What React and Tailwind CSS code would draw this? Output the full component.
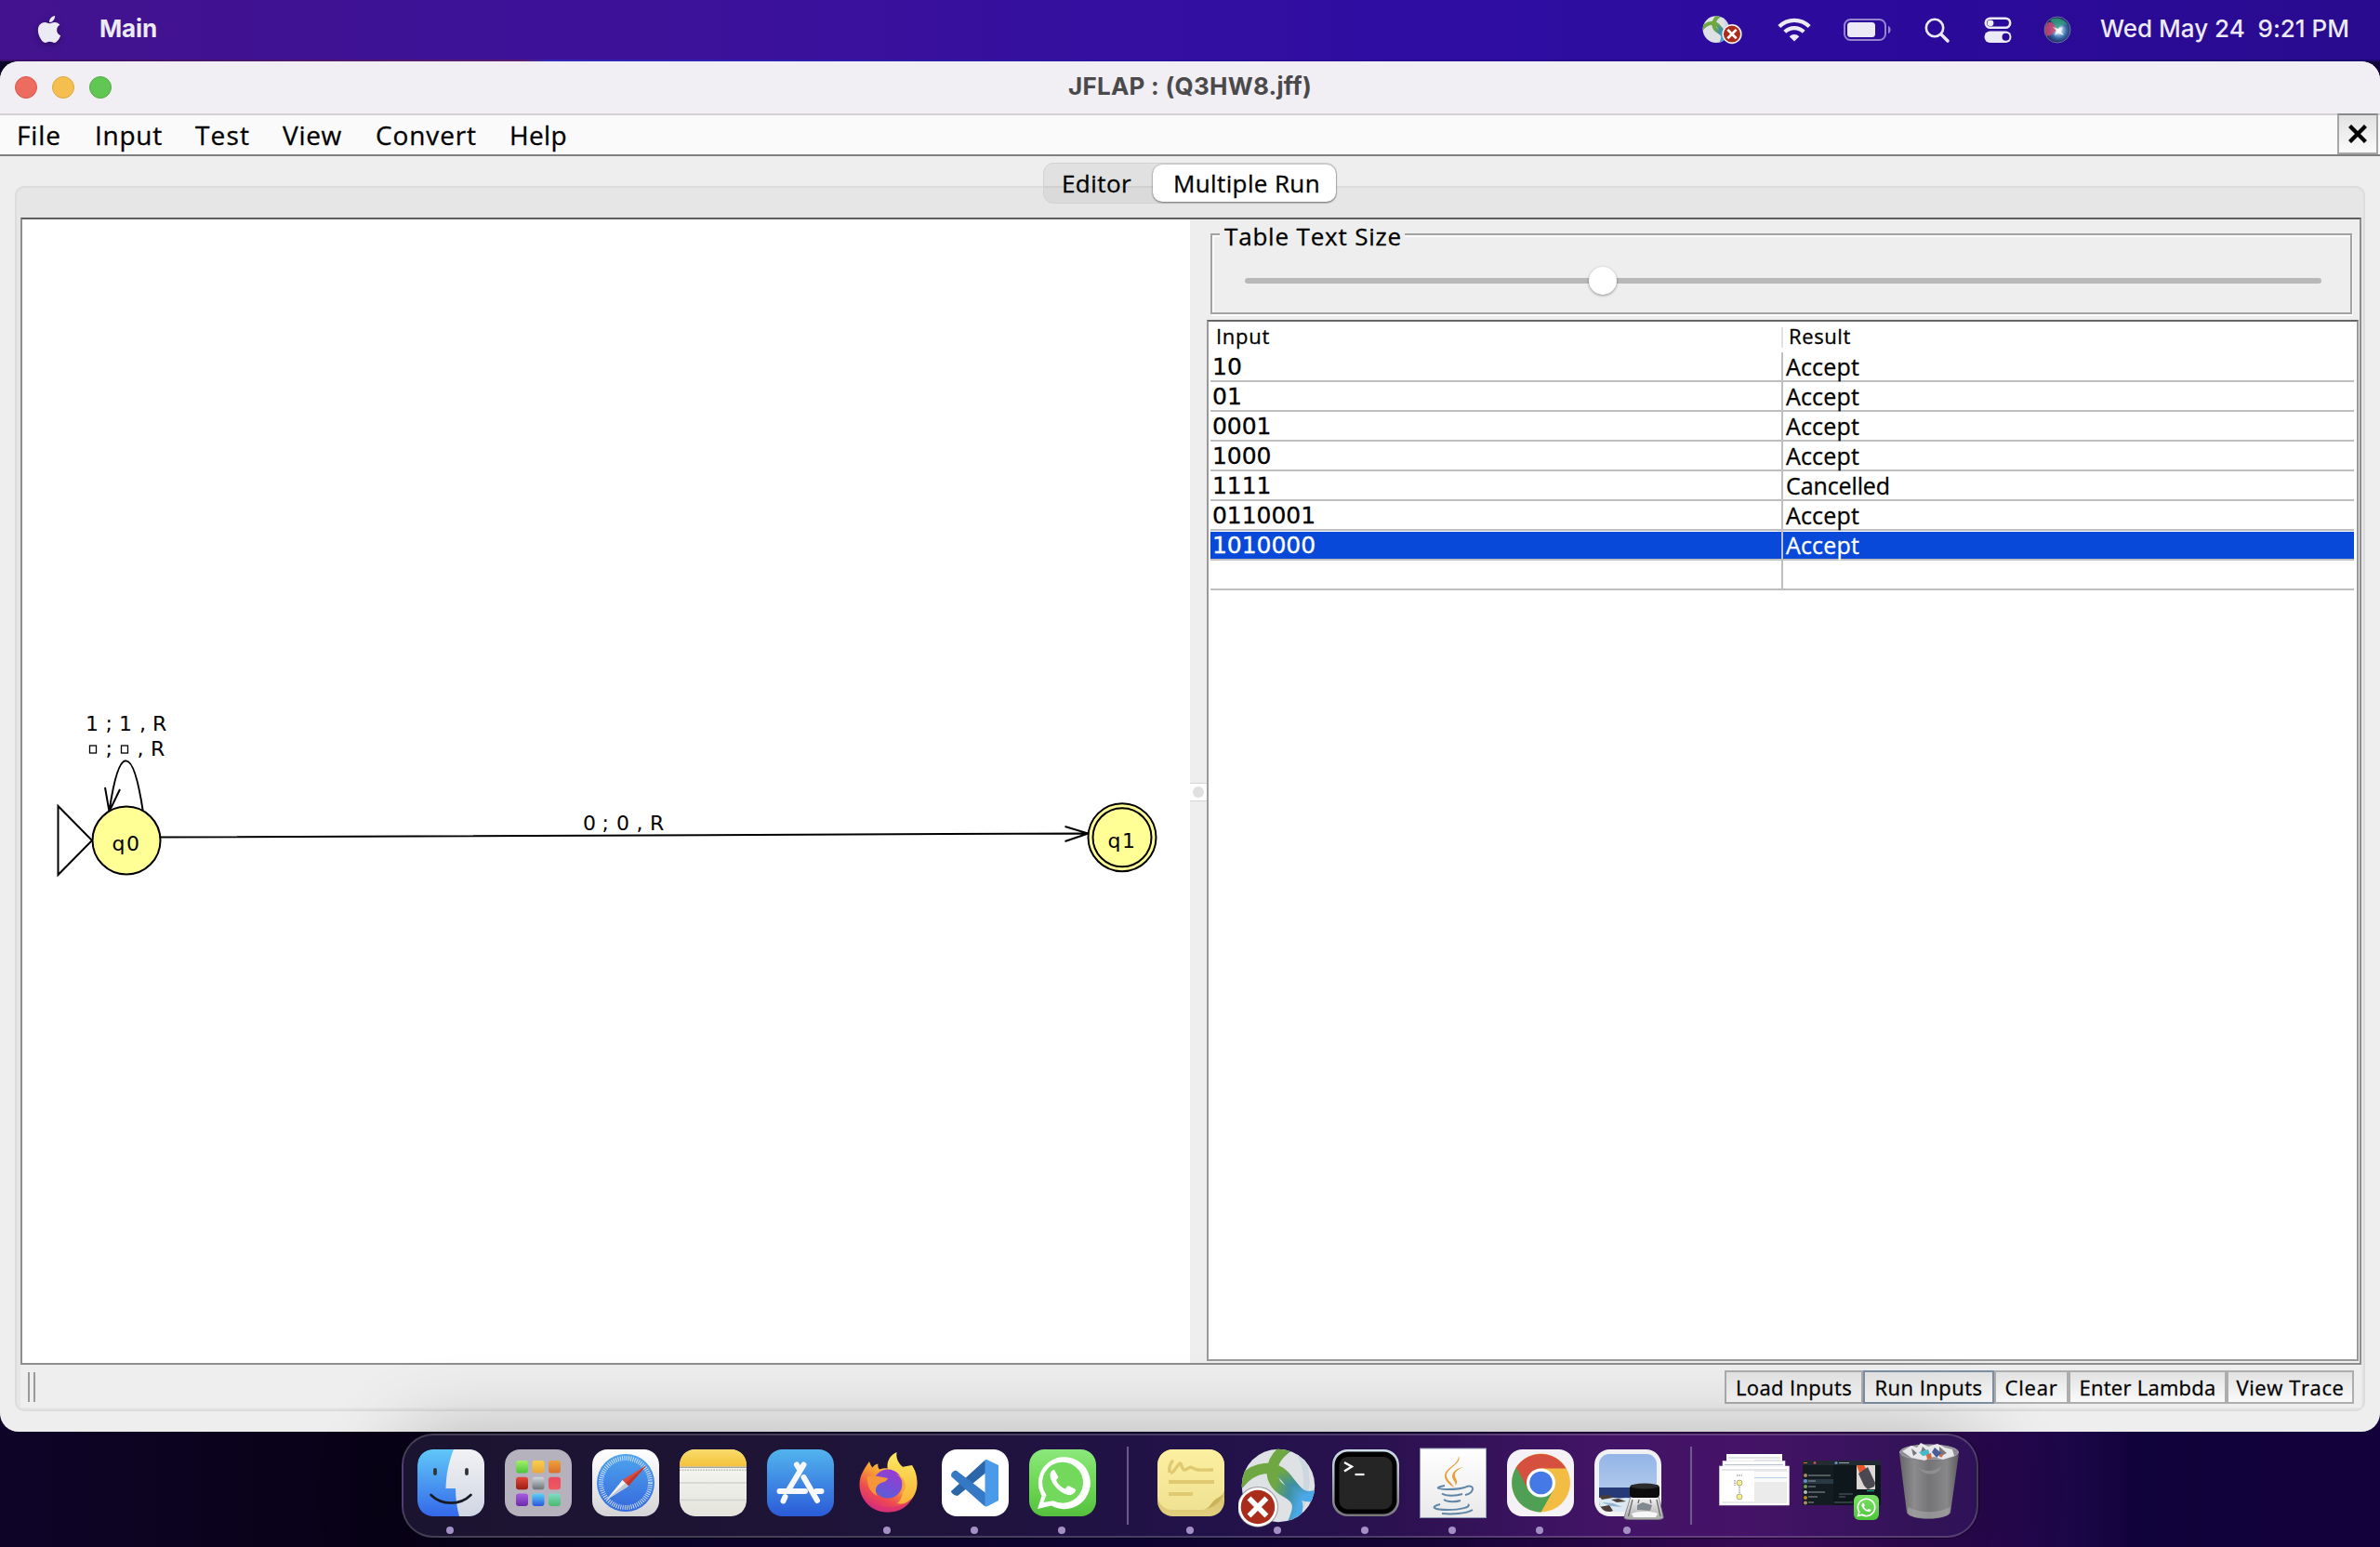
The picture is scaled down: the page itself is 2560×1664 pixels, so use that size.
import React, { useLayoutEffect, useRef, useState } from "react";
import { FaApple, FaWhatsapp } from "react-icons/fa";

const SANS = "font-['Open_Sans','Noto_Sans',sans-serif]";
const UI = "font-['Inter','Roboto',sans-serif]";
const DIGITS = "font-['DejaVu_Sans',sans-serif]";

/* Text tracked so that it fills the given width. */
function T({ w, className = "", children }) {
  const ref = useRef(null);
  const [ls, setLs] = useState(0);
  useLayoutEffect(() => {
    const el = ref.current;
    el.style.letterSpacing = "0px";
    const natural = el.getBoundingClientRect().width;
    setLs((w - natural) / String(children).length);
    el.style.letterSpacing = "";
  }, [w, children]);
  return (
    <span
      ref={ref}
      className={`inline-block whitespace-pre ${className}`}
      style={{ letterSpacing: `${ls}px` }}
    >
      {children}
    </span>
  );
}

function Globe({ className, id, viewBox, bx, by, r }) {
  const a = r * 0.44;
  return (
    <svg className={className} viewBox={viewBox}>
      <defs>
        <linearGradient id={id} x1="0" y1="0" x2="1" y2="1">
          <stop offset=".3" stopColor="#6fa843" />
          <stop offset=".62" stopColor="#3f8fa0" />
          <stop offset=".9" stopColor="#4ba8e6" />
        </linearGradient>
        <clipPath id={`${id}c`}>
          <circle cx="41" cy="41" r="37.500" />
        </clipPath>
      </defs>
      <circle cx="41" cy="41" r="37.500" fill="#dfe2e4" />
      <g clipPath={`url(#${id}c)`} fill="none">
        <path d="M58 0C76 24 74 60 50 84" stroke="#cdd7df" strokeWidth="6" />
        <path d="M0 40C16 20 38 18 50 34S66 56 84 50" stroke={`url(#${id})`} strokeWidth="11" />
        <path d="M56 -2C28 14 30 38 48 47S62 66 54 84" stroke={`url(#${id})`} strokeWidth="11" />
      </g>
      <circle cx={bx} cy={by} r={r} fill="#fff" stroke="#55555588" />
      <circle cx={bx} cy={by} r={r * 0.85} fill="#aa2d1b" />
      <path
        d={`M${bx - a} ${by - a}L${bx + a} ${by + a}M${bx + a} ${by - a}L${bx - a} ${by + a}`}
        stroke="#fff"
        strokeWidth={r * 0.26}
      />
    </svg>
  );
}

function MenuBar() {
  return (
    <div className={`flex h-16 items-center bg-[linear-gradient(to_right,#43138f,#3a119b_33%,#2f0da3_60%,#2b0a9b_80%,#290b8f)] text-[#eceaf5] ${UI}`}>
      <FaApple className="-mt-[2px] ml-[38px] h-[33px] w-[30px] drop-shadow-[0_2px_3px_#0005]" />
      <div className="-mt-[3px] ml-[39px] w-[66px] text-[26px] font-bold leading-none">
        <T w={62}>Main</T>
      </div>
      <div className="flex-1" />
      <Globe className="h-[32px] w-[43px]" id="mg" viewBox="2 0 113 84" bx={86} by={54} r={28} />
      <svg className="ml-[38px] h-[26px] w-[36px]" viewBox="0 0 36 26" fill="none" stroke="#eceaf5" strokeWidth="4.200">
        <path d="M1.800 9.500a23 23 0 0 1 32.400 0M7.800 15.300a14.500 14.500 0 0 1 20.400 0" />
        <path d="M18 25.500l-5.300-5.300a7.500 7.500 0 0 1 10.600 0z" fill="#eceaf5" stroke="none" />
      </svg>
      <svg className="ml-[35px] h-[24px] w-[52px]" viewBox="0 0 52 24">
        <rect x="1" y="1" width="44" height="22" rx="6.500" fill="none" stroke="#eceaf5" strokeOpacity=".55" strokeWidth="2" />
        <rect x="4" y="4" width="30" height="16" rx="3.500" fill="#eceaf5" />
        <path d="M48 8c3.500 1 3.500 7 0 8z" fill="#eceaf5" fillOpacity=".55" />
      </svg>
      <svg className="ml-[35px] h-[27px] w-[27px]" viewBox="0 0 27 27" fill="none" stroke="#eceaf5" strokeLinecap="round">
        <circle cx="11" cy="11" r="9.200" strokeWidth="2.600" />
        <path d="M18 18l7 7" strokeWidth="3.400" />
      </svg>
      <svg className="ml-[37px] h-[28px] w-[30px]" viewBox="0 0 30 28">
        <rect x="1.800" y="1.800" width="26.400" height="10" rx="5" fill="none" stroke="#eceaf5" strokeWidth="2.600" />
        <circle cx="7" cy="6.800" r="3.400" fill="#eceaf5" />
        <rect x=".5" y="15.500" width="29" height="12.500" rx="6.200" fill="#eceaf5" />
        <circle cx="23.500" cy="21.700" r="4" fill="#2b0a9b" />
      </svg>
      <svg className="ml-[34px] h-[30px] w-[30px]" viewBox="0 0 30 30">
        <defs>
          <radialGradient id="siri" cx=".55" cy=".52">
            <stop offset="0" stopColor="#fff" />
            <stop offset=".25" stopColor="#a9c9ee" />
            <stop offset=".6" stopColor="#3a6ba8" />
            <stop offset="1" stopColor="#1c2556" />
          </radialGradient>
        </defs>
        <circle cx="15" cy="15" r="14" fill="url(#siri)" />
        <path d="M3 9C8 3 13 10 14 15 10 20 5 23 3 21 1 17 1 13 3 9z" fill="#d0476e" opacity=".8" />
        <path d="M7 5c6-5 15-2 19 5-5-2-9 1-11 5-2-4-5-8-8-10z" fill="#2f9d78" opacity=".8" />
        <path d="M10 12L16 14L21 12L19 17L22 21L16 19L12 21L14 16z" fill="#fff" opacity=".75" />
        <circle cx="15" cy="15" r="14" fill="none" stroke="#9aa4c8" strokeOpacity=".6" />
      </svg>
      <div className="-mt-[3px] ml-[31px] mr-[33px] w-[268px] text-[26px] font-medium leading-none">
        <T w={268}>{"Wed May 24  9:21 PM"}</T>
      </div>
    </div>
  );
}

const menus = [
  ["File", "w-[84px]", 48],
  ["Input", "w-[108px]", 73],
  ["Test", "w-[94px]", 59],
  ["View", "w-[100px]", 64],
  ["Convert", "w-[144px]", 109],
  ["Help", "w-[80px]", 62],
];

function Diagram() {
  return (
    <svg className="block h-[1230px] w-[1256px]" viewBox="24 236 1256 1230" fill="none" stroke="#000" strokeWidth="2">
      <path d="M154 874C143 800 128 800 117.500 873M113 847L117.500 873L129 849" />
      <path d="M62.500 867V941L99 904Z" />
      <path d="M173 900.500L1170.500 896.500M1145.500 889L1170.500 896.500L1145.500 905" />
      <circle cx="136" cy="904" r="36.500" fill="#ffff96" />
      <circle cx="1207" cy="900.700" r="36.500" fill="#ffff96" />
      <circle cx="1207" cy="900.700" r="31.500" />
      <rect x="96.500" y="802" width="7" height="8" strokeWidth="1.300" />
      <rect x="130.500" y="802" width="7" height="8" strokeWidth="1.300" />
      <g fill="#000" stroke="none" className={`text-[22px] ${DIGITS}`}>
        <text x="92 113.500 128 150 164" y="786">1;1,R</text>
        <text x="113.500 147.500 162" y="812.700">;,R</text>
        <text x="627 647.500 663 684.500 699" y="892.700">0;0,R</text>
        <text x="120.500 136" y="914.700">q0</text>
        <text x="1191.500 1207" y="911.500">q1</text>
      </g>
    </svg>
  );
}

const rows = [
  ["10", 32, "Accept", 79],
  ["01", 32, "Accept", 79],
  ["0001", 63.5, "Accept", 79],
  ["1000", 63.5, "Accept", 79],
  ["1111", 63.5, "Cancelled", 112],
  ["0110001", 111, "Accept", 79],
  ["1010000", 111, "Accept", 79],
  ["", 0, "", 0],
];

function ResultTable() {
  return (
    <div className="h-[1120px] w-[1239px] border-2 border-[#999] border-t-[#666] bg-white pl-[2px]">
      <div className="flex h-[33px] w-[1230px] text-[22px] leading-[31px]">
        <div className="w-[614px] pl-[6px]"><T w={58}>Input</T></div>
        <div className="mt-[6px] h-[22px] w-[2px] bg-[#e2e2e2]" />
        <div className="pl-[6px]"><T w={67}>Result</T></div>
      </div>
      {rows.map(([a, aw, b, bw], i) => {
        const sel = i === 6;
        return (
          <div
            key={i}
            className={`flex h-8 w-[1230px] border-b-2 border-[#bfbfbf] text-[25px] ${sel ? "text-white" : "text-black"}`}
          >
            <div className={`w-[614px] pl-[2px] ${DIGITS} ${sel ? "mt-px h-[29px] bg-[#0849d9] leading-[30px]" : "leading-[32px]"}`}>{a && <T w={aw}>{a}</T>}</div>
            <div className="w-[2px] bg-[#bfbfbf]" />
            <div className={`w-[614px] pl-[3px] ${sel ? "mt-px h-[29px] bg-[#0849d9] leading-[28px]" : "leading-[30px]"}`}>{b && <T w={bw}>{b}</T>}</div>
          </div>
        );
      })}
    </div>
  );
}

function Btn({ className, w, focus, children }) {
  return (
    <div
      className={`flex h-9 items-center justify-center border-2 bg-gradient-to-b from-[#e2e2e2] to-[#fafafa] pb-px text-[22px] leading-none ${focus ? "border-[#7f8fa3]" : "border-[#adadad]"} ${className}`}
    >
      <T w={w}>{children}</T>
    </div>
  );
}

function Window() {
  return (
    <div className={`flex h-[1474px] w-full flex-col overflow-hidden rounded-[20px] bg-[#eee] text-black [-webkit-text-stroke:0.3px] ${SANS}`}>
      <div className={`flex h-[56px] items-center bg-[#f1eef4] [-webkit-text-stroke:0] ${UI}`}>
        <div className="flex w-[300px] gap-4 pl-4">
          <div className="size-6 rounded-full border border-[#d8564a] bg-[#ed6b5f]" />
          <div className="size-6 rounded-full border border-[#dba540] bg-[#f5bf4f]" />
          <div className="size-6 rounded-full border border-[#52ab43] bg-[#62c655]" />
        </div>
        <div className="flex flex-1 justify-center pb-[3px] text-[26px] font-bold leading-none text-[#4a494b]">
          <T w={262}>JFLAP : (Q3HW8.jff)</T>
        </div>
        <div className="w-[300px]" />
      </div>
      <div className="flex h-[46px] items-center border-b-2 border-t-2 border-b-[#808080] border-t-[#d4d2d6] bg-[#fafafa] pl-[18px] text-[28px] leading-none">
        {menus.map(([m, c, w]) => (
          <div key={m} className={c}><T w={w}>{m}</T></div>
        ))}
        <div className="-mt-[2px] ml-auto mr-[2px] flex h-11 w-11 items-center justify-center border-2 border-[#a6a6a6] border-t-[#888] bg-gradient-to-b from-[#e2e2e2] to-[#fafafa]">
          <svg className="h-5 w-5" viewBox="0 0 20 20" stroke="#000" strokeWidth="4.400">
            <path d="M1.500 1.500L18.500 18.500M18.500 1.500L1.500 18.500" />
          </svg>
        </div>
      </div>
      <div className="relative z-10 mx-auto mt-[7px] flex h-11 w-[316px] rounded-[11px] border border-[#d2d2d2] bg-black/5 text-[26px]">
        <div className="flex flex-1 items-center pb-px pl-[19px] leading-none"><T w={75}>Editor</T></div>
        <div className="my-px flex w-[197px] items-center rounded-[10px] bg-white pl-[22px] leading-none shadow-[0_1px_2px_#0006,0_0_2px_#0005]">
          <T w={158}>Multiple Run</T>
        </div>
      </div>
      <div className="mx-[16px] -mt-[19px] flex h-[1318px] flex-col rounded-[10px] border-2 border-[#dcdcdc] bg-[#e6e6e6] pb-[2px] pl-[4px] pr-[2px] pt-[32px]">
        <div className="flex h-[1234px] border-2 border-[#8e8e8e] border-t-[#5d5d5d] bg-[#eee]">
          <div className="w-[1256px] bg-white [-webkit-text-stroke:0]">
            <Diagram />
          </div>
          <div className="flex w-[18px] flex-col justify-center bg-[#eee] pt-[2px]">
            <div className="flex h-[20px] items-center justify-center border-y border-[#d5d5d5] bg-[#fdfdfd]">
              <div className="size-3 rounded-full bg-[#e0e0e0]" />
            </div>
          </div>
          <div className="w-[1240px]">
            <fieldset className="relative mb-[6px] ml-[4px] mt-[15px] h-[87px] w-[1228px] border-2 border-[#a3a3a3] shadow-[inset_2px_2px_0_#fafafa,1px_2px_0_#fff]">
              <div className="absolute -top-[15px] left-[8px] w-[199px] bg-[#eee] pl-[5px] text-[26px] leading-[32px]"><T w={191}>Table Text Size</T></div>
              <div className="ml-[35px] mt-[46px] h-[6px] w-[1158px] rounded-full bg-[#b8b8b8]">
                <div className="relative left-[370px] -top-[12px] size-[30px] rounded-full bg-white shadow-[0_1px_3px_#0006]" />
              </div>
            </fieldset>
            <ResultTable />
          </div>
        </div>
        <div className="flex h-[46px] items-center bg-[#eee] pl-[8px] pr-[8px] pt-[2px]">
          <div className="h-8 w-[8px] border-x-2 border-[#999]" />
          <div className="flex-1" />
          <Btn className="w-[149px]" w={125}>Load Inputs</Btn>
          <Btn className="w-[141px]" w={116} focus>Run Inputs</Btn>
          <Btn className="w-[80px]" w={57}>Clear</Btn>
          <Btn className="w-[170px]" w={147}>Enter Lambda</Btn>
          <Btn className="w-[137px]" w={116}>View Trace</Btn>
        </div>
      </div>
    </div>
  );
}

function G({ id, a, b, m }) {
  return (
    <linearGradient id={id} x1="0" y1="0" x2="0" y2="1">
      <stop offset="0" stopColor={a} />
      {m && <stop offset=".5" stopColor={m} />}
      <stop offset="1" stopColor={b} />
    </linearGradient>
  );
}

const Sq = ({ fill, ...p }) => <rect width="72" height="72" rx="16.500" fill={fill} {...p} />;

const pads = [
  ["#a2f06a", "#4cc43a"], ["#f7d14a", "#eea63a"], ["#efa03c", "#d9702c"],
  ["#e2483a", "#9c1c12"], ["#cfd8de", "#6b7074"], ["#ea4a62", "#ee5a60"],
  ["#a95be0", "#6a2ba8"], ["#5ad2f8", "#2a55dd"], ["#7fdcc8", "#4ab86c"],
];

const icons = {
  finder: (
    <>
      <defs><G id="f1" a="#60c8f8" b="#3468ea" /><G id="f2" a="#f2f2f4" b="#cfd6e4" /><clipPath id="fc"><Sq /></clipPath></defs>
      <g clipPath="url(#fc)">
        <Sq fill="url(#f1)" />
        <path d="M39 0C33 15 31 28 30.500 42H41C41 53 42.500 63 45 72H72V0Z" fill="url(#f2)" />
      </g>
      <path d="M19 22V26M53 22V26" stroke="#333" strokeWidth="3.800" strokeLinecap="round" />
      <path d="M14.500 49C26 60.500 46 60.500 57.500 49" stroke="#1a1a22" strokeWidth="2.600" fill="none" strokeLinecap="round" />
    </>
  ),
  launchpad: (
    <>
      <Sq fill="#b5b1bd" />
      {pads.map(([a, b], i) => (
        <g key={i}>
          <defs><G id={`lp${i}`} a={a} b={b} /></defs>
          <rect x={12 + (i % 3) * 17.5} y={12 + Math.floor(i / 3) * 17.8} width="13" height="13.500" rx="3" fill={`url(#lp${i})`} />
        </g>
      ))}
    </>
  ),
  safari: (
    <>
      <defs><G id="s1" a="#fff" b="#d4d4d6" /><G id="s2" a="#4ea4ee" b="#3568dc" /></defs>
      <Sq fill="url(#s1)" />
      <circle cx="36" cy="36" r="31" fill="url(#s2)" />
      <circle cx="36" cy="36" r="26.500" fill="none" stroke="#d9e9fb" strokeWidth="5" strokeDasharray="0.900 1.412" />
      <path d="M58.500 17L32.500 33L39 39.500Z" fill="#e0483e" />
      <path d="M58.500 17L35.750 36.250L39 39.500Z" fill="#b83a34" />
      <path d="M15 54.500L32.500 33L39 39.500Z" fill="#f4f4f4" />
      <path d="M15 54.500L35.750 36.250L39 39.500Z" fill="#bfc6d4" />
    </>
  ),
  notes: (
    <>
      <defs><G id="n1" a="#f9dc6c" b="#f5c23a" /><G id="n2" a="#fafaf8" b="#e4e4dc" /><clipPath id="nc"><Sq /></clipPath></defs>
      <g clipPath="url(#nc)">
        <Sq fill="url(#n2)" />
        <rect width="72" height="18.500" fill="url(#n1)" />
        <path d="M0 19.200H72" stroke="#a8a69c" strokeWidth="1.400" />
        <path d="M0 22.300H72" stroke="#bdbcb6" strokeWidth="1.600" strokeDasharray="1.600 1.200" />
        <path d="M0 36H72M0 54.500H72" stroke="#d2d2d0" strokeWidth="1.400" />
      </g>
    </>
  ),
  appstore: (
    <>
      <defs><G id="a1" a="#52b4ee" b="#2a5bd8" /></defs>
      <Sq fill="url(#a1)" />
      <g stroke="#f6f8fc" strokeWidth="6" strokeLinecap="round">
        <path d="M13.500 45H41M53 45H58.500" />
        <path d="M39.500 16.500L23 44M19.500 51L17.500 55.500" />
        <path d="M32 16.500L35 21.500M39.500 30L54 55" />
      </g>
    </>
  ),
  firefox: (
    <>
      <defs>
        <linearGradient id="ff1" x1=".85" y1=".1" x2=".25" y2="1">
          <stop offset="0" stopColor="#fbe04e" /><stop offset=".4" stopColor="#f79a34" />
          <stop offset=".7" stopColor="#ee4a50" /><stop offset="1" stopColor="#d62a80" />
        </linearGradient>
        <linearGradient id="ff2" x1=".7" y1="0" x2=".2" y2="1">
          <stop offset="0" stopColor="#9a3ad2" /><stop offset="1" stopColor="#5560d8" />
        </linearGradient>
        <G id="ff3" a="#fdea60" b="#f9b13a" />
      </defs>
      <path d="M16 13C17 16 18 18 19.500 19.500C21 17 23 16 25.500 15.500C25 18 25.500 20 27 21.500C31 20 36 20 40 21L62 17C67 25 68 32 67 39C65 56 51 67.500 36 67.500C19 67.500 5.500 54 5.500 38C5.500 28 10 22 16 13Z" fill="url(#ff1)" />
      <path d="M45.500 3C44 12 50 17 56 23C58 22 58 19 59 17.500C67 26 69 36 66.500 44C63 56 53 60 46 58C54 52 54 36 46 29C40 24 35 21 35.500 19C35 12 39 6 45.500 3Z" fill="url(#ff3)" />
      <circle cx="36" cy="37" r="15.500" fill="url(#ff2)" />
      <path d="M13.500 30C18 27.500 23 29 28 29.500L36 31C35 35 30 35 27 37C22 40 22 46 25 50C15 46 14 36 13.500 30Z" fill="#f6963a" />
      <path d="M8 49C20 66 50 66 62 52C56 65 46 67.500 36 67.500C22 67.500 12 60 8 49Z" fill="#d92f78" opacity=".7" />
      <path d="M43 26C52 29 55 40 49 49C57 46 58 30 43 26Z" fill="#f9a236" />
    </>
  ),
  vscode: (
    <>
      <Sq fill="#fff" />
      <path d="M10 45L46.500 11.500L50 23L17 50C14 50 10 47 10 45Z" fill="#2a66a8" />
      <path d="M10 27C11 24 14 22 16 23L50 49L46.500 61.500L10.500 29.500Z" fill="#3578c6" />
      <path d="M46.500 11.500C47 11 48.500 11 49 11.300L61 17V55L49 61.200C48 61.700 47 61.500 46.500 61Z" fill="#4b9aea" />
    </>
  ),
  whatsapp: (
    <>
      <defs><G id="w1" a="#8ce87c" m="#6dd954" b="#56c03e" /></defs>
      <Sq fill="url(#w1)" />
      <path d="M9 64L13.500 50A28 28 0 1 1 24 60.500Z" fill="#fff" />
      <path d="M15.500 57L18.500 49A22 22 0 1 1 26 55.300Z" fill="#72d95c" />
      <path d="M27 22C25 21.500 23 24 22.500 27C22 36 34 48.500 43 49C47 49 50 46.500 50 43L42 39L38.500 42.500C34 40.500 30.500 37 29 33L31.500 30Z" fill="#fff" />
    </>
  ),
  stickies: (
    <>
      <defs><G id="st" a="#fcf0a0" b="#efe393" /><G id="st2" a="#c6ab4e" b="#e2cf7e" /></defs>
      <Sq fill="url(#st2)" />
      <path d="M0 16.500A16.500 16.500 0 0 1 16.500 0H55.500A16.500 16.500 0 0 1 72 16.500V44C68 56 58 65 48 65H16A16 16 0 0 1 0 50Z" fill="url(#st)" />
      <path d="M72 44C71 50 66 51 62 54C57 58 56 64 48 65C60 64 70 56 72 44Z" fill="#c9b45c" />
      <path d="M13 25C12 18 15 13 17 12M14 25C18 26 20 18 24 15C26 14 26 22 29 22C33 22 34 17 38 20C42 23 46 22 60 22" fill="none" stroke="#dfca72" strokeWidth="3.400" />
      <path d="M12 35H61M12 48H38" stroke="#dfca72" strokeWidth="4.200" />
    </>
  ),
  terminal: (
    <>
      <defs><G id="t1" a="#cfe0ea" b="#77777a" /></defs>
      <Sq fill="url(#t1)" />
      <rect x="2.500" y="2.500" width="67" height="67" rx="14.500" fill="#000" />
      <rect x="7.500" y="8" width="57" height="56.500" rx="9" fill="#252525" />
      <path d="M13 14L21 18.500L13 23.500" fill="none" stroke="#fff" strokeWidth="2.400" />
      <path d="M24.500 27H34.500" stroke="#fff" strokeWidth="2.200" />
    </>
  ),
  java: (
    <>
      <defs><G id="j1" a="#fff" b="#e9e9e9" /></defs>
      <rect x=".5" y="-1" width="71" height="74.500" fill="url(#j1)" stroke="#8c9cb0" />
      <path d="M42 7C46 16 28 20 29 29C30 34 35 36 37 41C27 35 24 28 30 22C34 18 42 14 42 7ZM47.500 19C41 21 37 25 38 29C39 33 42 34 38.500 39C39 34 35 33 35 29C35 24 40 20 47.500 19Z" fill="#e6a03a" />
      <g fill="none" stroke="#5f86a6" strokeWidth="2">
        <path d="M27 39C16 41 18 42.500 30 43C38 43 46 42 50 40.500M50 40C60 37 59 47 49 49M24 47.500C28 50.500 40 50 46 48M26 54C30 57 40 56.500 44 55M22 59C10 62 16 65 30 65C44 65 56 62 52 59M24 69C34 70 50 69.500 57 65" />
      </g>
    </>
  ),
  chrome: (
    <>
      <Sq fill="#f5f2f7" />
      <circle cx="36.500" cy="36" r="31.500" fill="#f2bd42" />
      <path d="M36.500 20.500H63.500A31.500 31.500 0 0 0 9.300 20.200L23 44Z" fill="#d6503f" />
      <path d="M10 19.200A31.500 31.500 0 0 0 36.500 67.500L50 43.700L23 43.700Z" fill="#4f9f55" />
      <circle cx="36.500" cy="36" r="15.500" fill="#fff" />
      <circle cx="36.500" cy="36" r="12.300" fill="#4479e6" />
    </>
  ),
  preview: (
    <>
      <defs><G id="p1" a="#8fb2e6" b="#c6d8f0" /><G id="p2" a="#f6f6f6" b="#a8a8a8" /><clipPath id="pc"><rect x="5" y="5" width="62" height="62" rx="11" /></clipPath></defs>
      <Sq fill="#f1f0f2" />
      <g clipPath="url(#pc)">
        <rect width="72" height="72" fill="url(#p1)" />
        <rect y="41" width="72" height="31" fill="#273a78" />
        <path d="M0 54C10 48 20 54 34 52L72 54V72H0Z" fill="#dbe8f2" />
        <path d="M5 50L16 49L20 52L8 54ZM5 62L16 60L20 66L10 70L5 70ZM18 54L26 53L34 56L24 57Z" fill="#4a3c38" />
        <path d="M8 57L20 58L30 62L18 61Z" fill="#8fb4d0" />
      </g>
      <path d="M39 51H69L74 72C75 76 71 75.500 54 75.500S32 76 32 73Z" fill="url(#p2)" stroke="#777" strokeWidth=".8" />
      <path d="M41 54L36.500 72M67 54L71 72M48 54L47 58M60 54L61 58" stroke="#6a6a6a" strokeWidth="1.300" />
      <path d="M46 60L52 57L62 60L60 66L46 65Z" fill="#80898e" />
      <path d="M40 69C48 66 60 66 68 69L66 73H42Z" fill="#f7f7f7" />
      <rect x="38" y="38" width="32" height="14" rx="4" fill="#0c0c0c" />
      <ellipse cx="54" cy="39.500" rx="15" ry="3" fill="#2c2c2e" />
    </>
  ),
};

function Item({ name, dot }) {
  return (
    <div className="flex w-[72px] flex-col items-center gap-[11px]">
      {name === "jflap" ? (
        <Globe className="-mb-3 -mt-[4px] ml-[2px] h-[88px] w-[88px] max-w-none" id="dg" viewBox="0 0 84 84" bx={20} by={63} r={20.5} />
      ) : (
        <svg className="h-[72px] w-[72px] overflow-visible" viewBox="0 0 72 72">{icons[name]}</svg>
      )}
      {dot && <div className="-ml-[2px] size-2 rounded-full bg-[#a490c4]" />}
    </div>
  );
}

function Divider({ className }) {
  return <div className={`h-[84px] w-[2px] bg-[#7d6a9c]/80 ${className}`} />;
}

function Thumbs() {
  return (
    <>
      <svg className="mt-[5px] h-[56px] w-[76px]" viewBox="0 0 76 56">
        <rect x="8" y="0" width="60" height="20" fill="#fff" />
        <path d="M10 4H66M38 7H66" stroke="#c3c9d2" strokeWidth="1" />
        <rect x="4" y="7.500" width="67" height="20" fill="#fff" stroke="#dcdce2" strokeWidth=".6" />
        <path d="M6 11.500H69" stroke="#b9c3d0" strokeWidth="1" />
        <rect x=".5" y="13" width="75" height="42" fill="#fff" stroke="#dcdce2" strokeWidth=".6" />
        <path d="M3 17H73" stroke="#c9cdd4" strokeWidth="1" />
        <rect x="38" y="18" width="35" height="33" fill="#ebebeb" />
        <rect x="38" y="19" width="35" height="11" fill="#fafafa" />
        <path d="M38 25.500H73" stroke="#b4cdea" strokeWidth="1.200" />
        <path d="M22 33V43M19 23H25M17 28V34" stroke="#777" strokeWidth="1" strokeDasharray="1.500 1" />
        <circle cx="22" cy="31" r="3" fill="#f6ee86" stroke="#666" strokeWidth=".5" />
        <circle cx="22" cy="46" r="3" fill="#f6ee86" stroke="#666" strokeWidth=".5" />
        <path d="M3 52H73" stroke="#d5d5d5" strokeWidth="1" />
      </svg>
      <div className="relative ml-[14px] mt-[12px] h-[48px] w-[84px]">
        <svg className="block h-[48px] w-[84px]" viewBox="0 0 84 48">
          <rect width="84" height="48" fill="#0e171b" />
          <rect width="33" height="48" fill="#131c21" />
          <rect width="84" height="5" fill="#212b31" />
          <rect y="20" width="33" height="5" fill="#2a3a44" />
          <path d="M1 2.500H5" stroke="#c9733a" strokeWidth="1" />
          <circle cx="13" cy="2.500" r="1.400" fill="#d04a6a" />
          <circle cx="36" cy="2.500" r="1.600" fill="#6d8fc8" />
          <path d="M39 2.500H50" stroke="#9aa6ac" strokeWidth="1" />
          <path d="M6 16H30M6 22H14M6 28H14M6 34H24M6 39H16M6 45H12" stroke="#8f9a9f" strokeWidth="1" />
          <g fill="#b08a6a">
            <circle cx="3" cy="16" r="2" /><circle cx="3" cy="22" r="2" fill="#6d8fc8" /><circle cx="3" cy="28" r="2" fill="#7a9a5a" />
            <circle cx="3" cy="34" r="2" fill="#bbb" /><circle cx="3" cy="40" r="2" fill="#b8862a" /><circle cx="3" cy="45.500" r="2" />
          </g>
          <rect x="58" y="5" width="20" height="26" fill="#ded8d2" />
          <path d="M58 5H66L70 12L62 16Z" fill="#e8562c" />
          <path d="M60 14L70 7L78 24L77 28L70 31L66 27Z" fill="#4a4850" />
          <path d="M39 36H54M39 39H46M34 45H54" stroke="#56636a" strokeWidth="1.200" />
          <path d="M69 32.500H77" stroke="#1f9a78" strokeWidth="1.500" />
        </svg>
        <div className="absolute left-[55px] top-[37px] flex size-[27px] items-center justify-center rounded-md bg-gradient-to-b from-[#7be266] to-[#4cc436] text-white">
          <FaWhatsapp className="size-[23px]" />
        </div>
      </div>
      <svg className="ml-[19px] mt-[-8px] h-[84px] w-[66px]" viewBox="0 0 66 84">
        <defs>
          <linearGradient id="tr" x1="0" x2="1" y1="0" y2="0">
            <stop offset="0" stopColor="#66666a" /><stop offset=".25" stopColor="#8c8c8e" />
            <stop offset=".5" stopColor="#757577" /><stop offset=".8" stopColor="#88888a" /><stop offset="1" stopColor="#5c5c60" />
          </linearGradient>
        </defs>
        <path d="M1 12L9 76C12 85 52 85 56 76L65 12C56 22 10 22 1 12Z" fill="url(#tr)" />
        <ellipse cx="33" cy="11" rx="31.500" ry="8" fill="#8e8e92" stroke="#aaaaae" strokeWidth="1" />
        <path d="M4 10L14 4L20 6L24 1L32 5L42 2L50 6L58 8L60 15L48 19L38 16L28 20L14 17Z" fill="#e8e8ea" />
        <path d="M14 7L20 12L16 15ZM44 5L52 12L44 16ZM26 5L30 9L24 11Z" fill="#77777c" />
        <path d="M22 11L32 8L34 14L26 15Z" fill="#46b8c8" />
        <path d="M39 6L46 12L41 17L36 11Z" fill="#4a5a9a" />
        <path d="M30 14L35 12L36 18L31 19ZM44 14L49 13L46 17Z" fill="#d06a3c" />
        <path d="M10 70C24 77 42 77 56 70L55 76C52 84 12 84 10 76Z" fill="#a9a9ab" opacity=".55" />
        <path d="M22 28C32 34 42 30 46 26C44 36 30 38 22 28Z" fill="#9d9d9f" opacity=".6" />
      </svg>
    </>
  );
}

function Dock() {
  return (
    <div className="relative z-20 mx-auto mt-[2px] flex h-[112px] w-[1696px] items-start gap-[22px] rounded-[34px] border-2 border-[#ffffff2e] bg-[linear-gradient(to_right,#1b1430,#1e1436_25%,#22124a_52%,#2a114f_62%,#421466_76%,#451368_85%,#331358_96%,#2e1257)] pl-[15px] pt-[15px] shadow-[0_8px_90px_#0000004a,0_0_0_1px_#0008]">
      <Item name="finder" dot />
      <Item name="launchpad" />
      <Item name="safari" />
      <Item name="notes" />
      <Item name="appstore" />
      <Item name="firefox" dot />
      <Item name="vscode" dot />
      <Item name="whatsapp" dot />
      <Divider className="-mt-[3px] ml-[11px] mr-[9px]" />
      <Item name="stickies" dot />
      <Item name="jflap" dot />
      <Item name="terminal" dot />
      <Item name="java" dot />
      <Item name="chrome" dot />
      <Item name="preview" dot />
      <Divider className="-mt-[3px] ml-[9px] mr-[7px]" />
      <div className="flex items-start">
        <Thumbs />
      </div>
    </div>
  );
}

export default function App() {
  return (
    <div className="h-[1664px] w-[2560px] overflow-hidden bg-[linear-gradient(to_right,#0e0428,#080216_16%,#0e0330_28%,#10043a_48%,#1a0540_60%,#440b66_75%,#2c0850_82%,#1c0648_87%,#10023a_90%,#13013c)]">
      <MenuBar />
      <div className="h-[2px] bg-[linear-gradient(to_right,#3a0f6a,#5a1d70_22%,#3026b8_23%,#2a0a96_60%,#1c0870)]" />
      <Window />
      <Dock />
    </div>
  );
}
